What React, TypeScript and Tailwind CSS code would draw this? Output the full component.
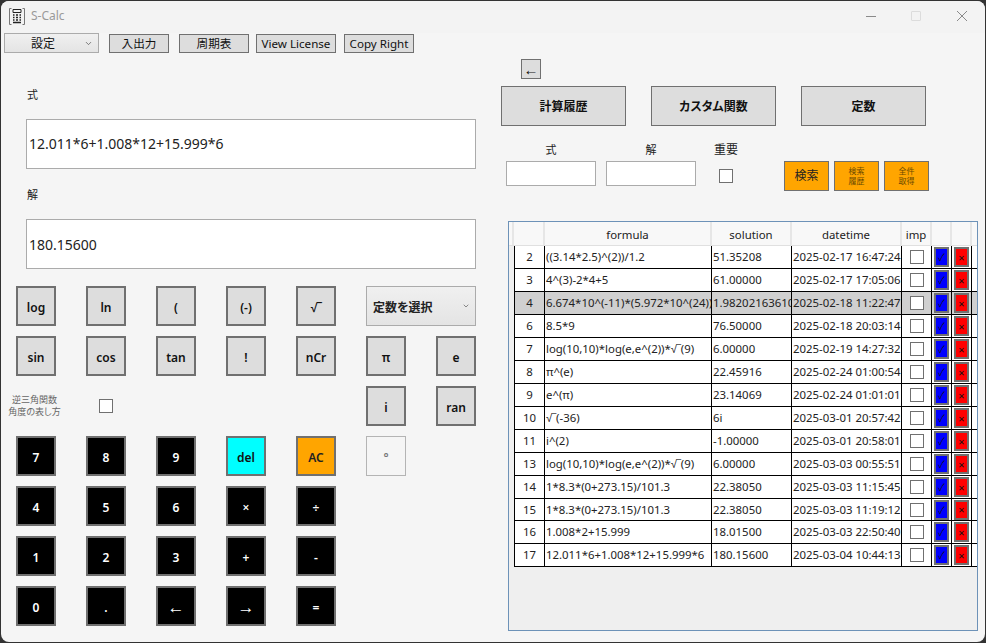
import { ChevronDown } from "lucide-react";

const FONT = "font-['Noto_Sans','Noto_Sans_CJK_JP',sans-serif]";
const ARROW_FONT = "font-['Liberation_Sans',sans-serif]";
const PALT = "[font-feature-settings:'palt']";

const GRAY_BTN = "border-2 border-[#707070] bg-[#dddddd] text-[#111]";
const BLACK_BTN = "border-2 border-[#707070] bg-black text-white";

const CalcKey = ({ label, tone = GRAY_BTN, size = "text-[12px]", className = "" }: { label: string; tone?: string; size?: string; className?: string }) => (
	<button className={`w-10 h-10 pt-[3px] flex items-center justify-center font-semibold leading-none ${size} ${tone} ${className}`}>{label}</button>
);

// the root sign is narrower in the original font
const Formula = ({ text }: { text: string }) => {
	const parts = text.split("√‾");
	return (
		<>
			{parts.map((part, i) => (
				<span key={i}>
					{i > 0 && <span className={ARROW_FONT}>√‾</span>}
					{part}
				</span>
			))}
		</>
	);
};

const rows = [
	{ id: "2", formula: "((3.14*2.5)^(2))/1.2", solution: "51.35208", date: "2025-02-17 16:47:24", h: "h-[23px]" },
	{ id: "3", formula: "4^(3)-2*4+5", solution: "61.00000", date: "2025-02-17 17:05:06", h: "h-[23px]" },
	{ id: "4", formula: "6.674*10^(-11)*(5.972*10^(24))/(6.371*10^(6))^(2)", solution: "1.98202163610", date: "2025-02-18 11:22:47", h: "h-[23px]", selected: true },
	{ id: "6", formula: "8.5*9", solution: "76.50000", date: "2025-02-18 20:03:14", h: "h-[23px]" },
	{ id: "7", formula: "log(10,10)*log(e,e^(2))*√‾(9)", solution: "6.00000", date: "2025-02-19 14:27:32", h: "h-[23px]" },
	{ id: "8", formula: "π^(e)", solution: "22.45916", date: "2025-02-24 01:00:54", h: "h-[23px]" },
	{ id: "9", formula: "e^(π)", solution: "23.14069", date: "2025-02-24 01:01:01", h: "h-[23px]" },
	{ id: "10", formula: "√‾(-36)", solution: "6i", date: "2025-03-01 20:57:42", h: "h-[23px]" },
	{ id: "11", formula: "i^(2)", solution: "-1.00000", date: "2025-03-01 20:58:01", h: "h-[23px]" },
	{ id: "13", formula: "log(10,10)*log(e,e^(2))*√‾(9)", solution: "6.00000", date: "2025-03-03 00:55:51", h: "h-[23px]" },
	{ id: "14", formula: "1*8.3*(0+273.15)/101.3", solution: "22.38050", date: "2025-03-03 11:15:45", h: "h-[23px]" },
	{ id: "15", formula: "1*8.3*(0+273.15)/101.3", solution: "22.38050", date: "2025-03-03 11:19:12", h: "h-[22px]" },
	{ id: "16", formula: "1.008*2+15.999", solution: "18.01500", date: "2025-03-03 22:50:40", h: "h-[23px]" },
	{ id: "17", formula: "12.011*6+1.008*12+15.999*6", solution: "180.15600", date: "2025-03-04 10:44:13", h: "h-[23px]" },
];

const HeaderCell = ({ label, className }: { label?: string; className: string }) => (
	<div className={`flex items-center justify-center pt-[3px] h-full border-r-2 border-[#e6e6e6] text-[11.4px] text-[#222] shrink-0 ${className}`}>{label}</div>
);

const HistoryTable = () => (
	<div className="ml-[7px] mt-[30px] w-[470px] h-[410px] border border-[#6d92b8] bg-[#efefef] flex flex-col">
		<div className="flex h-[24px] bg-[#f8f8f8] w-[468px] border-b border-[#e0e0e0] shrink-0">
			<HeaderCell className="w-[5px]" />
			<HeaderCell className="w-[31px]" />
			<HeaderCell className="w-[167px]" label="formula" />
			<HeaderCell className="w-[80px]" label="solution" />
			<HeaderCell className="w-[110px]" label="datetime" />
			<HeaderCell className="w-[30px]" label="imp" />
			<HeaderCell className="w-[20px]" />
			<HeaderCell className="w-[20px]" />
		</div>
		{rows.map((row) => (
			<div key={row.id} className={`flex ml-[5px] w-[463px] border-b border-black shrink-0 text-[11.4px] leading-none text-[#222] ${row.h} ${row.selected ? "bg-[#d0d0d0]" : "bg-white"}`}>
				<div className="w-[31px] border-l border-r border-black flex items-center justify-center shrink-0">{row.id}</div>
				<div className="w-[167px] border-r border-black flex items-center pl-[1px] overflow-hidden whitespace-nowrap shrink-0">
					<Formula text={row.formula} />
				</div>
				<div className="w-[80px] border-r border-black flex items-center pl-[1px] overflow-hidden whitespace-nowrap shrink-0">{row.solution}</div>
				<div className="w-[110px] border-r border-black flex items-center pl-[1px] overflow-hidden whitespace-nowrap shrink-0">{row.date}</div>
				<div className="w-[30px] border-r border-black flex items-center justify-center shrink-0">
					<span className="w-[14px] h-[14px] border border-[#707070] bg-white" />
				</div>
				<div className="w-[20px] border-r border-black flex items-center justify-center shrink-0">
					<span className="w-[15px] h-[20px] border-2 border-[#707070] bg-[#0000ff] text-[#111] text-[10px] flex items-center justify-center">✓</span>
				</div>
				<div className="w-[20px] border-r border-black flex items-center justify-center shrink-0">
					<span className="w-[15px] h-[20px] border-2 border-[#707070] bg-[#ff0000] text-[#111] text-[11px] flex items-center justify-center">×</span>
				</div>
			</div>
		))}
	</div>
);

const CalcIcon = () => (
	<svg width="16" height="17" viewBox="0 0 16 17" fill="none" stroke="#222" strokeWidth="1">
		<path d="M2.5 0.5H0.5V16.5H2.5M13.5 0.5H15.5V16.5H13.5" stroke="#777" />
		<path d="M4 1.5H12V4.5H4Z" />
		<path d="M4 7H5.5M7 7H9M10.5 7H12M4 9.5H5.5M7 9.5H9M10.5 9.5H12M4 12H5.5M7 12H9M10.5 12H12M4 14.5H12" strokeWidth="1.4" />
	</svg>
);

const SmallButton = ({ label, className }: { label: string; className: string }) => (
	<button className={`h-[19px] pt-[1px] border border-[#707070] bg-[#dddddd] text-[11.6px] leading-none text-[#111] ${className}`}>{label}</button>
);

export default function App() {
	return (
		<div className={`w-[986px] h-[643px] bg-[#333333] pt-[1px] pl-[1px] overflow-hidden ${FONT}`}>
			<div className="w-[984px] h-[641px] bg-[#f5f5f5] rounded-lg overflow-hidden flex flex-col">
				{/* title bar */}
				<div className="h-[32px] shrink-0 flex items-center pl-[8px] pb-[2px] bg-[#f3f3f3]">
					<CalcIcon />
					<span className="ml-[6px] text-[12px] text-[#9a9a9a]">S-Calc</span>
					<span className="ml-auto w-[10px] h-px bg-[#8a8a8a]" />
					<span className="ml-[35px] w-[10px] h-[10px] border border-[#dcdcdc] rounded-[1px]" />
					<svg className="ml-[36px] mr-[18px]" width="10" height="10" viewBox="0 0 10 10" stroke="#8a8a8a" strokeWidth="1">
						<path d="M0 0L10 10M10 0L0 10" />
					</svg>
				</div>

				{/* menu row */}
				<div className="h-[20px] shrink-0 flex items-center pl-[3px] text-[12px]">
					<div className="w-[95px] h-[20px] pt-[1px] border border-[#ababab] bg-gradient-to-b from-[#f0f0f0] to-[#e4e4e4] flex items-center pl-[26px] text-[#111]">
						<span>設定</span>
						<ChevronDown className="ml-auto mr-[5px] w-[9px] h-[9px] text-[#555]" />
					</div>
					<SmallButton label="入出力" className="ml-[10px] w-[60px]" />
					<SmallButton label="周期表" className="ml-[10px] w-[70px]" />
					<SmallButton label="View License" className="ml-[7px] w-[80px]" />
					<SmallButton label="Copy Right" className="ml-[8px] w-[70px]" />
				</div>

				<div className="flex flex-1 min-h-0">
					{/* left: calculator */}
					<div className="w-[500px] shrink-0 pl-[15px]">
						<div className="ml-[11px] mt-[33px] h-[18px] text-[11px] leading-[18px] text-[#222]">式</div>
						<div className="ml-[10px] mt-[15px] w-[450px] h-[50px] border border-[#ababab] bg-white flex items-center pl-[2px] pb-[1px] text-[14px] text-[#222]">12.011*6+1.008*12+15.999*6</div>
						<div className="ml-[11px] mt-[17px] h-[18px] text-[11px] leading-[18px] text-[#222]">解</div>
						<div className="ml-[10px] mt-[15px] w-[450px] h-[50px] border border-[#ababab] bg-white flex items-center pl-[2px] text-[14px] text-[#222]">180.15600</div>

						<div className="mt-[17px] grid grid-cols-[repeat(7,40px)] grid-rows-[repeat(7,40px)] gap-x-[30px] gap-y-[10px]">
							<CalcKey label="log" />
							<CalcKey label="ln" />
							<CalcKey label="(" />
							<CalcKey label="(-)" />
							<CalcKey label="√‾" className={ARROW_FONT} />
							<div className={`col-span-2 w-[110px] h-10 pt-[3px] border border-[#ababab] bg-gradient-to-b from-[#f0f0f0] to-[#e4e4e4] flex items-center pl-[6px] text-[12px] font-semibold text-[#222] ${PALT}`}>
								<span>定数を選択</span>
								<ChevronDown className="ml-auto mr-[5px] -mt-[3px] w-[8px] h-[8px] text-[#555]" />
							</div>

							<CalcKey label="sin" />
							<CalcKey label="cos" />
							<CalcKey label="tan" />
							<CalcKey label="!" />
							<CalcKey label="nCr" />
							<CalcKey label="π" />
							<CalcKey label="e" />

							<div className="col-span-1 w-10 flex items-center justify-center">
								<span className={`w-[60px] shrink-0 text-center text-[9px] leading-[12px] text-[#666] -ml-[3px] ${PALT}`}>逆三角関数<br />角度の表し方</span>
							</div>
							<div className="w-10 flex items-center justify-center">
								<span className="w-[14px] h-[14px] border border-[#707070] bg-white" />
							</div>
							<div className="col-span-3" />
							<CalcKey label="i" />
							<CalcKey label="ran" />

							<CalcKey label="7" tone={BLACK_BTN} />
							<CalcKey label="8" tone={BLACK_BTN} />
							<CalcKey label="9" tone={BLACK_BTN} />
							<CalcKey label="del" tone="border-2 border-[#707070] bg-[#00ffff] text-[#111]" />
							<CalcKey label="AC" tone="border-2 border-[#707070] bg-[#ffa500] text-[#222]" />
							<CalcKey label="°" tone="border border-[#b4b4b4] bg-[#f5f5f5] text-[#777]" />
							<div />

							<CalcKey label="4" tone={BLACK_BTN} />
							<CalcKey label="5" tone={BLACK_BTN} />
							<CalcKey label="6" tone={BLACK_BTN} />
							<CalcKey label="×" tone={BLACK_BTN} />
							<CalcKey label="÷" tone={BLACK_BTN} />
							<div className="col-span-2" />

							<CalcKey label="1" tone={BLACK_BTN} />
							<CalcKey label="2" tone={BLACK_BTN} />
							<CalcKey label="3" tone={BLACK_BTN} />
							<CalcKey label="+" tone={BLACK_BTN} />
							<CalcKey label="-" tone={BLACK_BTN} />
							<div className="col-span-2" />

							<CalcKey label="0" tone={BLACK_BTN} />
							<CalcKey label="." tone={BLACK_BTN} />
							<CalcKey label="←" tone={BLACK_BTN} size="text-[17px]" className={ARROW_FONT} />
							<CalcKey label="→" tone={BLACK_BTN} size="text-[17px]" className={ARROW_FONT} />
							<CalcKey label="=" tone={BLACK_BTN} />
						</div>
					</div>

					{/* right: history */}
					<div className="flex-1 min-w-0">
						<button className={`ml-[20px] mt-[6px] w-5 h-5 flex items-center justify-center border border-[#707070] bg-[#dddddd] text-[15px] leading-none text-[#111] ${ARROW_FONT}`}>←</button>
						<div className="mt-[7px] flex gap-[25px]">
							{["計算履歴", "カスタム関数", "定数"].map((t) => (
								<button key={t} className={`w-[125px] h-10 pt-[2px] border border-[#707070] bg-[#dddddd] text-[12px] font-semibold text-[#111] ${PALT}`}>{t}</button>
							))}
						</div>
						<div className="mt-[15px] flex ml-[5px] items-start">
							<div className="w-[90px] text-center">
								<div className="h-[20px] text-[11px] leading-[18px] text-[#222]">式</div>
								<div className="w-[90px] h-[25px] border border-[#ababab] bg-white" />
							</div>
							<div className="ml-[10px] w-[90px] text-center">
								<div className="h-[20px] text-[11px] leading-[18px] text-[#222]">解</div>
								<div className="w-[90px] h-[25px] border border-[#ababab] bg-white" />
							</div>
							<div className="w-[60px] flex flex-col items-center">
								<div className="h-[28px] text-[12px] leading-[18px] text-[#222]">重要</div>
								<span className="w-[14px] h-[14px] border border-[#707070] bg-white" />
							</div>
							<div className="ml-[28px] mt-[20px] flex gap-[5px]">
								<button className="w-[45px] h-[30px] border border-[#707070] bg-[#ffa500] text-[12px] text-[#222]">検索</button>
								<button className="w-[45px] h-[30px] border border-[#707070] bg-[#ffa500] text-[8px] leading-[10px] text-[#6b4a00]">検索<br />履歴</button>
								<button className="w-[45px] h-[30px] border border-[#707070] bg-[#ffa500] text-[8px] leading-[10px] text-[#6b4a00]">全件<br />取得</button>
							</div>
						</div>
						<HistoryTable />
					</div>
				</div>
			</div>
		</div>
	);
}
